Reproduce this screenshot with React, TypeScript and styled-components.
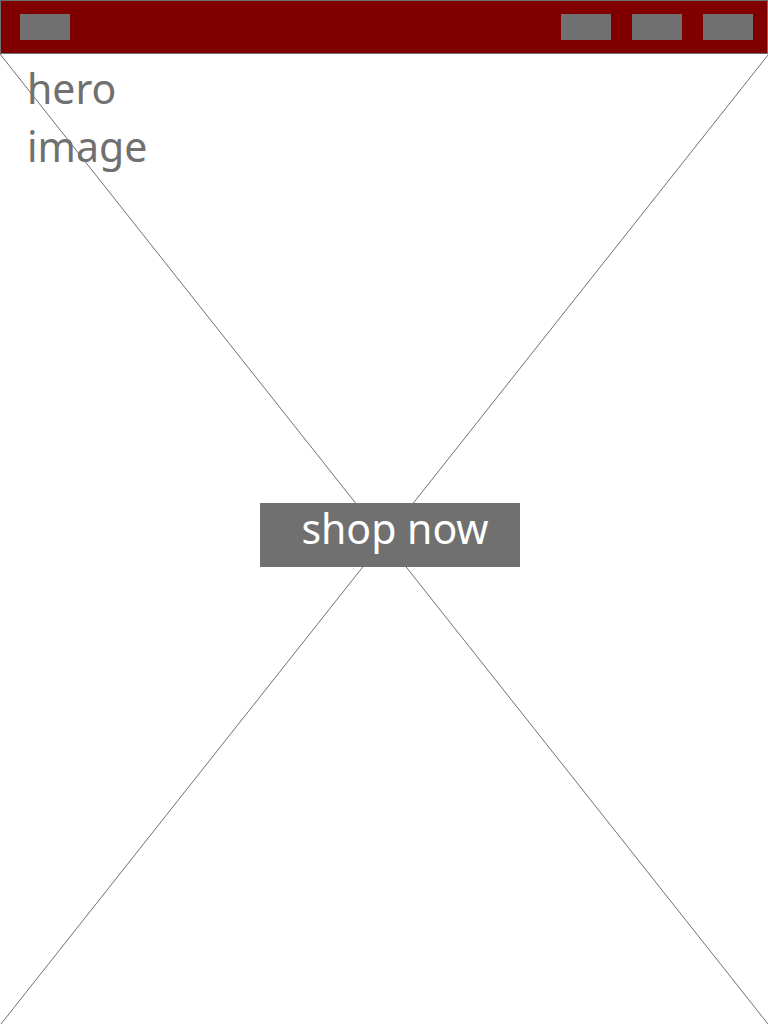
import React from "react";
import styled, { createGlobalStyle } from "styled-components";

const GlobalStyle = createGlobalStyle`
  *, *::before, *::after { box-sizing: border-box; }
  body {
    margin: 0;
    background: #fff;
    font-family: "Noto Sans", "Open Sans", sans-serif;
  }
`;

const Page = styled.div`
  display: flex;
  flex-direction: column;
  min-height: 100vh;
`;

const Header = styled.header`
  display: flex;
  align-items: center;
  justify-content: space-between;
  height: 54px;
  padding: 0 14px 0 19px;
  background: #800000;
  border: 1px solid #707070;
`;

const Nav = styled.nav`
  display: flex;
  gap: 21px;
`;

const BlockLink = styled.a`
  display: block;
  width: 50px;
  height: 26px;
  background: #707070;
`;

const Hero = styled.main`
  position: relative;
  flex: 1;
  display: flex;
  flex-direction: column;
  align-items: center;
`;

const Cross = styled.svg`
  position: absolute;
  inset: 0;
  width: 100%;
  height: 100%;
  stroke: #707070;
  stroke-width: 1;
`;

const HeroTitle = styled.h1`
  position: relative;
  align-self: flex-start;
  width: 160px;
  margin: 5px 0 0 27px;
  color: #707070;
  font-size: 41px;
  font-weight: 400;
  line-height: 58px;
`;

const ShopButton = styled.button`
  position: relative;
  width: 260px;
  height: 64px;
  margin: 328px 0 0 12px;
  padding: 0 0 14px 10px;
  border: 0;
  background: #707070;
  color: #fff;
  font-family: inherit;
  font-size: 41px;
  line-height: 50px;
  white-space: nowrap;
  cursor: pointer;
`;

export default function App() {
  return (
    <>
      <GlobalStyle />
      <Page>
        <Header>
          <BlockLink href="#home" aria-label="Home" />
          <Nav aria-label="Main">
            <BlockLink href="#products" aria-label="Products" />
            <BlockLink href="#about" aria-label="About" />
            <BlockLink href="#contact" aria-label="Contact" />
          </Nav>
        </Header>
        <Hero>
          <Cross aria-hidden="true">
            <line x1="0" y1="0" x2="100%" y2="100%" />
            <line x1="100%" y1="1" x2="1" y2="100%" />
          </Cross>
          <HeroTitle>hero image</HeroTitle>
          <ShopButton type="button">shop now</ShopButton>
        </Hero>
      </Page>
    </>
  );
}
